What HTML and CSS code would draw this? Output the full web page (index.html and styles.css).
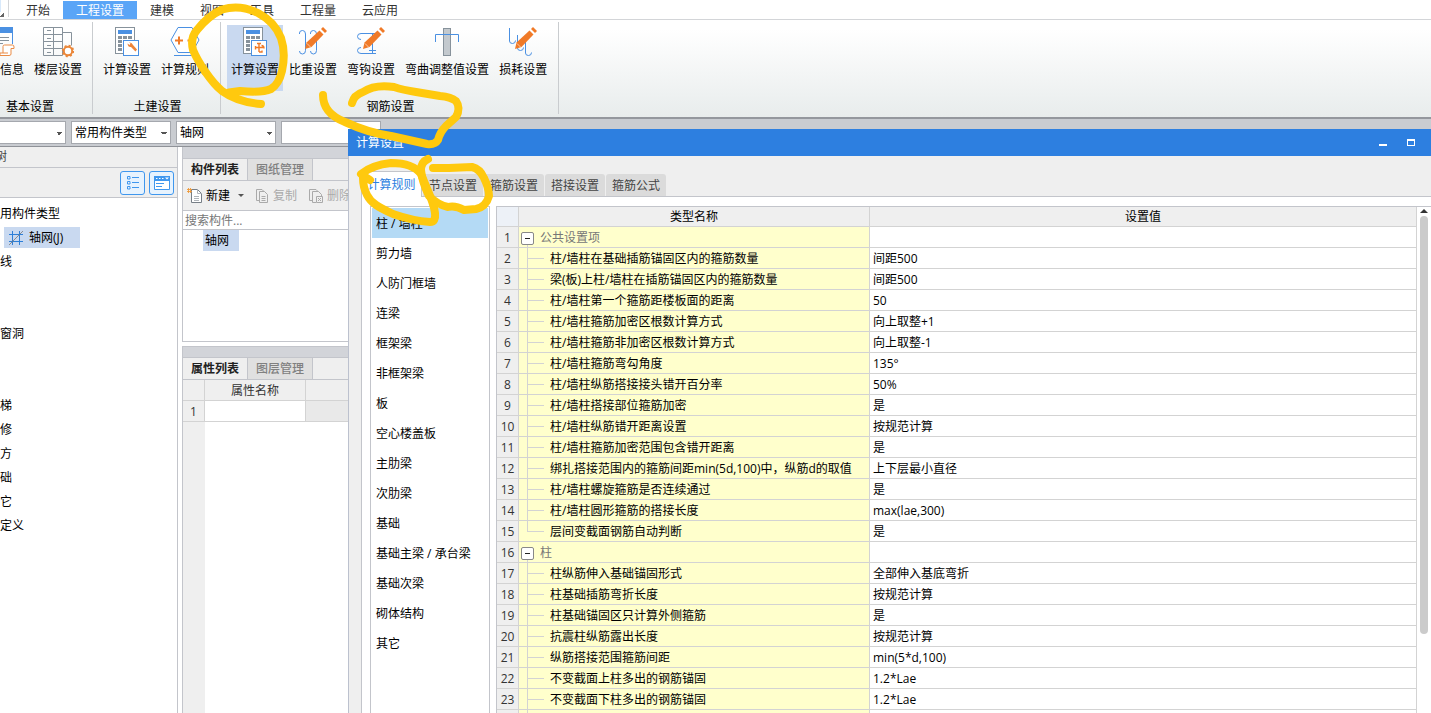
FILE: index.html
```
<!DOCTYPE html>
<html lang="zh-CN">
<head>
<meta charset="utf-8">
<title>计算设置</title>
<link rel="stylesheet" href="styles.css">
</head>
<body>
<svg class="defs" aria-hidden="true">
  <defs>
    <g id="calc">
      <rect x=".5" y="1.500" width="19" height="26" fill="#fff" stroke="#87929b"/>
      <rect x="3" y="4" width="14" height="4" fill="#4a90e2"/>
      <path d="M3 11.500h4M8 11.500h4M13 11.500h4M3 15.500h4M8 15.500h4M3 19.500h4M3 23.500h4" stroke="#87929b" stroke-width="3"/>
      <rect x="8.500" y="14.500" width="15" height="15" fill="#fff" stroke="#4a90e2"/>
    </g>
    <g id="pencil">
      <path d="M7 23l1.500-6.500L21.500 4.500l4 4L13.500 21z" fill="#f07a28"/>
      <path d="M23 3l2-2 4 4-2 2z" fill="#f07a28"/>
      <path d="M9 17.500l3.500 3.500" stroke="#fff" stroke-width=".6"/>
    </g>
  </defs>
</svg>
<div class="app">
  <nav class="menu">
    <span class="corner"></span>
    <a class="menu-tab" href="#">开始</a><a class="menu-tab active" href="#">工程设置</a><a class="menu-tab" href="#">建模</a><a class="menu-tab" href="#">视图</a><a class="menu-tab" href="#">工具</a><a class="menu-tab" href="#">工程量</a><a class="menu-tab" href="#">云应用</a>
  </nav>
  <div class="ribbon">
    <section class="group first">
      <div class="tools">
        <button class="tool cut"><svg width="15" height="32" viewBox="0 0 15 32"><path d="M0 1.500h12.500V18" fill="none" stroke="#4a90e2"/><path d="M0 1h13v6H0z" fill="#4a90e2"/><path d="M0 11.500h9M0 14.500h9M0 17.500h3" stroke="#87929b"/><path d="M3 20.500q0-1.500 1.500-1.500h8q1.500 0 1.500 2v1.500h-3V28q0 1.500-2 1.500H0v-2.500h3zM3 27h5" fill="#fff" stroke="#ea8b45"/></svg><span>信息</span></button>
        <button class="tool"><svg width="32" height="32" viewBox="0 0 32 32"><path d="M1.500 1.500h19v28h-19zM11.500 1.500v28M1.500 8.500h19M1.500 15.500h19M1.500 22.500h19M20.500 6.500h9v13" fill="none" stroke="#87929b"/><path d="M5 4.500h4M5 12.500h4M5 19.500h4M5 26.500h4" stroke="#87929b"/><circle cx="26" cy="25" r="4.200" fill="#fff" stroke="#ea8638" stroke-width="2"/><circle cx="26" cy="25" r="5.400" fill="none" stroke="#ea8638" stroke-width="1.600" stroke-dasharray="2.100 2.140"/></svg><span>楼层设置</span></button>
      </div>
      <h2>基本设置</h2>
    </section>
    <section class="group">
      <div class="tools">
        <button class="tool"><svg width="24" height="32" viewBox="0 0 24 32"><use href="#calc"/><path d="M12.500 17.500l2 1.500 1-1.500-1.500-1q3-.5 4 2.500l4 4.500-1.500 2-4.500-4.500q-3 .5-3.500-3.500z" fill="#ee8438"/></svg><span>计算设置</span></button>
        <button class="tool"><svg width="30" height="32" viewBox="0 0 30 32"><path d="M8 1.500h14L29 14l-7 12.500H8L1 14z" fill="#fff" stroke="#4a90e2"/><path d="M5 14.500h8M9 10.500v8M17.500 14.500h4" stroke="#f07a28" stroke-width="2"/><path d="M4 29.500h22" stroke="#4a90e2"/></svg><span>计算规则</span></button>
      </div>
      <h2>土建设置</h2>
    </section>
    <section class="group">
      <div class="tools">
        <button class="tool on"><svg width="24" height="32" viewBox="0 0 24 32"><use href="#calc"/><path d="M16 17.500V26M14 17.500h4M12 21.500h9M12.500 20v3.500M18.500 19.500q2.500 0 2.500 3M16 26h3v-1.500" fill="none" stroke="#f07a28" stroke-width="1.400"/></svg><span>计算设置</span></button>
        <button class="tool"><svg width="30" height="32" viewBox="0 0 30 32"><path d="M1.500 8V7q0-2.500 3-2.500t3 3.500v16.500q0 3.500-3 3.500t-3-3M12.500 8V7q0-2.500 3-2.500t3 3.500v16.500q0 3.500-3 3.500t-3-3" fill="none" stroke="#4a90e2"/><use href="#pencil"/></svg><span>比重设置</span></button>
        <button class="tool"><svg width="30" height="32" viewBox="0 0 30 32"><path d="M22 7.500H5q-3.500 0-3.500 3t3.500 3M20 27.500H5q-3.500 0-3.500-3t3.500-3M16.500 7.500v20M13 24.500h7" fill="none" stroke="#4a90e2"/><use href="#pencil"/></svg><span>弯钩设置</span></button>
        <button class="tool"><svg width="24" height="32" viewBox="0 0 24 32"><rect x="8.500" y="2.500" width="7" height="27" fill="#c3c9ce" stroke="#87929b"/><path d="M.5 16V8.500h23V16" fill="none" stroke="#4a90e2"/></svg><span>弯曲调整值设置</span></button>
        <button class="tool"><svg width="30" height="32" viewBox="0 0 30 32"><path d="M1.500 2v13q0 2.500 3 2.500t3-3M9.500 9v13q0 2.500 3 2.500t3-3M17.500 16v11q0 2.500 3 2.500t3-3" fill="none" stroke="#4a90e2"/><use href="#pencil"/></svg><span>损耗设置</span></button>
      </div>
      <h2>钢筋设置</h2>
    </section>
  </div>
  <div class="filters">
    <select class="combo short" aria-label="楼层"><option></option></select>
    <select class="combo" aria-label="构件类型"><option>常用构件类型</option></select>
    <select class="combo" aria-label="构件"><option>轴网</option></select>
    <select class="combo" aria-label="名称"><option></option></select>
  </div>
  <main class="work">
    <aside class="nav">
      <div class="nav-title">树</div>
      <div class="nav-tools">
        <button aria-label="列表"><svg width="14" height="14" viewBox="0 0 14 14"><path d="M1.500.5H4V3H1.500zM1.500 5.500H4V8H1.500zM1.500 10.500H4V13H1.500zM6 1.500h7M6 6.500h7M6 11.500h7" fill="none" stroke="#3f97ee"/></svg></button>
        <button aria-label="窗口"><svg width="16" height="14" viewBox="0 0 16 14"><path d="M.5.5h15v13H.5z" fill="#fff" stroke="#3f97ee"/><path d="M0 0h16v5H0z" fill="#3f97ee"/><path d="M2 2.500h1.500M5 2.500h1.500M8 2.500h1.500" stroke="#fff"/><path d="M11 1.500h4l-2 2z" fill="#fff"/><path d="M2 7.500h8M2 10.500h6" stroke="#3f97ee"/></svg></button>
      </div>
      <ul class="tree">
        <li>用构件类型</li>
        <li><span class="picked"><svg width="16" height="16" viewBox="0 0 16 16"><path d="M4.500 1v14M11.500 1v14M1 4.500h14M1 11.500h14" stroke="#2d7fd8"/><path d="M1 15L15 1" stroke="#777" stroke-width=".8"/></svg>轴网(J)</span></li>
        <li>线</li><li></li><li></li><li>窗洞</li><li></li><li></li><li>梯</li><li>修</li><li>方</li><li>础</li><li>它</li><li>定义</li>
      </ul>
    </aside>
    <div class="lists">
      <section class="panel">
        <div class="strip"></div>
        <div class="tabs"><button class="on">构件列表</button><button>图纸管理</button></div>
        <div class="actions">
          <button><svg width="15" height="16" viewBox="0 0 15 16"><path d="M4.500 1.500h6l4 4v9h-10z" fill="#fff" stroke="#777f87"/><path d="M10.500 1.500v4h4M7 8.500h5M7 10.500h5M7 12.500h5" fill="none" stroke="#b0b5ba"/><path d="M0 1.500h5M0 3.500h5M1.500 0v5M3.500 0v5" stroke="#ee9a3a" stroke-width=".9"/></svg>新建<i class="caret"></i></button>
          <button class="off"><svg width="13" height="16" viewBox="0 0 13 16"><path d="M3.500 3.500h5l3 3v8h-8zM3 12.500H.5v-11H6l2 2M5.500 8.500h4M5.500 10.500h4M5.500 12.500h4" fill="none" stroke="#aaa"/></svg>复制</button>
          <button class="off"><svg width="14" height="16" viewBox="0 0 14 16"><path d="M3 12.500H.5v-11H7l2 2M7 14.500H3.500v-11h6l3 3V8M7.500 8.500h6v6h-6zM9 10l3 3M12 10l-3 3" fill="none" stroke="#aaa"/></svg>删除</button>
        </div>
        <input class="search" type="text" placeholder="搜索构件..." aria-label="搜索构件">
        <div class="items"><span>轴网</span></div>
      </section>
      <section class="panel grow">
        <div class="strip"></div>
        <div class="tabs"><button class="on">属性列表</button><button>图层管理</button></div>
        <table class="props">
          <thead><tr><th class="no"></th><th class="pname">属性名称</th><th></th></tr></thead>
          <tbody><tr><th class="no">1</th><td></td><td class="dim"></td></tr></tbody>
        </table>
        <div class="gutter"></div>
      </section>
    </div>
  </main>

  <section class="dialog" role="dialog" aria-label="计算设置">
    <header class="title"><h1>计算设置</h1>
      <button aria-label="最小化"><i class="min"></i></button><button aria-label="最大化"><i class="max"></i></button>
    </header>
    <div class="dlg-tabs"><button class="on">计算规则</button><button>节点设置</button><button>箍筋设置</button><button>搭接设置</button><button>箍筋公式</button></div>
    <div class="sheet">
      <ul class="kinds">
        <li class="on">柱 / 墙柱</li><li>剪力墙</li><li>人防门框墙</li><li>连梁</li><li>框架梁</li><li>非框架梁</li><li>板</li><li>空心楼盖板</li><li>主肋梁</li><li>次肋梁</li><li>基础</li><li>基础主梁 / 承台梁</li><li>基础次梁</li><li>砌体结构</li><li>其它</li>
      </ul>
      <div class="grid">
        <table class="rules">
          <thead><tr><th class="no"></th><th class="name">类型名称</th><th>设置值</th></tr></thead>
          <tbody>
            <tr class="cat"><th>1</th><td><button aria-label="折叠"></button>公共设置项</td><td></td></tr>
            <tr><th>2</th><td>柱/墙柱在基础插筋锚固区内的箍筋数量</td><td>间距500</td></tr>
            <tr><th>3</th><td>梁(板)上柱/墙柱在插筋锚固区内的箍筋数量</td><td>间距500</td></tr>
            <tr><th>4</th><td>柱/墙柱第一个箍筋距楼板面的距离</td><td>50</td></tr>
            <tr><th>5</th><td>柱/墙柱箍筋加密区根数计算方式</td><td>向上取整+1</td></tr>
            <tr><th>6</th><td>柱/墙柱箍筋非加密区根数计算方式</td><td>向上取整-1</td></tr>
            <tr><th>7</th><td>柱/墙柱箍筋弯勾角度</td><td>135°</td></tr>
            <tr><th>8</th><td>柱/墙柱纵筋搭接接头错开百分率</td><td>50%</td></tr>
            <tr><th>9</th><td>柱/墙柱搭接部位箍筋加密</td><td>是</td></tr>
            <tr><th>10</th><td>柱/墙柱纵筋错开距离设置</td><td>按规范计算</td></tr>
            <tr><th>11</th><td>柱/墙柱箍筋加密范围包含错开距离</td><td>是</td></tr>
            <tr><th>12</th><td>绑扎搭接范围内的箍筋间距min(5d,100)中，纵筋d的取值</td><td>上下层最小直径</td></tr>
            <tr><th>13</th><td>柱/墙柱螺旋箍筋是否连续通过</td><td>是</td></tr>
            <tr><th>14</th><td>柱/墙柱圆形箍筋的搭接长度</td><td>max(lae,300)</td></tr>
            <tr class="last"><th>15</th><td>层间变截面钢筋自动判断</td><td>是</td></tr>
            <tr class="cat"><th>16</th><td><button aria-label="折叠"></button>柱</td><td></td></tr>
            <tr><th>17</th><td>柱纵筋伸入基础锚固形式</td><td>全部伸入基底弯折</td></tr>
            <tr><th>18</th><td>柱基础插筋弯折长度</td><td>按规范计算</td></tr>
            <tr><th>19</th><td>柱基础锚固区只计算外侧箍筋</td><td>是</td></tr>
            <tr><th>20</th><td>抗震柱纵筋露出长度</td><td>按规范计算</td></tr>
            <tr><th>21</th><td>纵筋搭接范围箍筋间距</td><td>min(5*d,100)</td></tr>
            <tr><th>22</th><td>不变截面上柱多出的钢筋锚固</td><td>1.2*Lae</td></tr>
            <tr><th>23</th><td>不变截面下柱多出的钢筋锚固</td><td>1.2*Lae</td></tr>
            <tr><th></th><td></td><td></td></tr>
          </tbody>
        </table>
        <div class="scroll"><i class="up"></i><i class="thumb"></i></div>
      </div>
    </div>
  </section>

  <svg class="ink" width="520" height="240" viewBox="0 0 520 240" fill="none" stroke="#ffc90e" stroke-width="8" stroke-linecap="round" stroke-linejoin="round" aria-hidden="true">
    <path d="M261 104Q237 102 222 91C211 82 198 62 193 50Q190 38 197 30Q208 16 222 9.500Q240 4 258 13Q275 22 281 38Q286 53 282 71Q279 84 271 89Q262 93 240 91L229 92.500"/>
    <path d="M323 95C323 108 332 117 345 122C358 128 376 134 391 136L427 144Q435 145 438 140Q440 132 446 126L456 117Q461 108 456 101Q451 97 440 96L416 92Q403 90 394 87Q375 84 363 92Q354 95 352 103"/>
    <path d="M370 180L361 174Q372 165 391 163Q413 163 421 174C426 187 434 202 435 213Q436 222 430 222Q413 221 393 214C378 207 371 203 367 195Q363 187 363 178"/>
    <path d="M428 159Q421 162 421 170Q422 182 429 196Q438 205 448 207Q455 205 464 210L476 209Q486 207 489 196Q489 188 484 178Q480 169 472 167L449 168H433"/>
  </svg>
</div>
</body>
</html>
```
FILE: styles.css
```
* { box-sizing: border-box; }
body, h1, h2, ul { margin: 0; padding: 0; }
ul { list-style: none; }
body, button, input, select, table {
  font: 12px/20px "Open Sans", "Noto Sans CJK SC", sans-serif;
  color: #000;
}
h1, h2 { font-size: 12px; font-weight: 400; }
button { border: 0; padding: 0; background: none; white-space: nowrap; }
svg { flex: none; }
.defs { position: absolute; width: 0; height: 0; }

.app {
  position: relative;
  display: flex;
  flex-direction: column;
  height: 100vh;
  overflow: hidden;
  background: #fff;
}

/* Menu */
.menu { display: flex; height: 20px; border-bottom: 1px solid #d3d5d8; }
.corner {
  width: 9px;
  margin-right: 4px;
  height: 17px;
  border-right: 1px solid #d3d5d8;
  background: linear-gradient(135deg, transparent 50%, #666 50%) 0 13px / 4px 4px no-repeat,
    linear-gradient(#d8e9fb, #d8e9fb) 0 0 / 1px 12px no-repeat;
}
.menu-tab { padding: 1px 13px 0; color: #333; text-decoration: none; }
.menu-tab.active { margin-top: 1px; padding-top: 0; background: #5aa5f7; color: #fff; }

/* Ribbon */
.ribbon {
  display: flex;
  height: 99px;
  border-bottom: 2px solid #94979d;
  background: linear-gradient(#fff 10%, #e8ecec);
}
.group {
  margin: 2px 0 3px;
  padding: 3px 6px 0 5px;
  border-right: 1px solid #c9cccf;
}
.group.first { padding: 3px 5px 0 0; }
.tools { display: flex; height: 66px; }
.tool {
  display: flex;
  flex-direction: column;
  align-items: center;
  gap: 2px;
  padding: 1px 4px 0;
  border: solid transparent;
  border-width: 0 1px;
}
.tool.cut { align-items: flex-start; padding-left: 0; border-left: 0; }
.tool.on { background: #c9d9f0 padding-box; }
.group h2 { padding: 6px 0 0 3px; text-align: center; }
.group.first h2 { padding-left: 6px; text-align: left; }

/* Filters */
.filters {
  display: flex;
  gap: 5px;
  height: 28px;
  padding: 2px 0 3px;
  border-bottom: 1px solid #8f9298;
  background: #c9ccd1;
}
.combo {
  appearance: none;
  width: 100px;
  height: 23px;
  padding: 0 14px 0 3px;
  border: 1px solid #a5a8ae;
  border-radius: 0;
  background: linear-gradient(to bottom left, transparent 50%, #555 50%) right 0 top 0 / 0 0 no-repeat,
    linear-gradient(to bottom right, #555 50%, transparent 50%) right 3px top 10px / 3px 3px no-repeat,
    linear-gradient(to bottom left, #555 50%, transparent 50%) right 6px top 10px / 3px 3px no-repeat, #fff;
}
.combo.short { width: 66px; border-left: 0; }

/* Workspace */
.work { display: flex; flex: 1; min-height: 0; }
.nav { width: 178px; border-right: 1px solid #c3c5cb; }
.nav-title { height: 21px; text-indent: -5px; overflow: hidden; background: #efefef; border-bottom: 1px solid #c3c5cb; color: #444; }
.nav-tools {
  display: flex;
  justify-content: flex-end;
  gap: 4px;
  height: 30px;
  padding: 3px 3px 0 0;
  background: #efefef;
  border-bottom: 1px solid #c3c5cb;
}
.nav-tools button {
  display: grid;
  place-items: center;
  width: 25px;
  height: 24px;
  border: 1px solid #3f97ee;
  border-radius: 3px;
  background: #e7f3fe;
}
.tree { padding-top: 4px; }
.tree li { height: 24px; line-height: 24px; }
.picked {
  display: flex;
  align-items: center;
  gap: 5px;
  width: 76px;
  height: 21px;
  margin-left: 4px;
  padding-left: 4px;
  background: #c9d9f0;
}
.tree li:has(.picked) { padding-top: 1px; }
.lists { display: flex; flex-direction: column; gap: 4px; width: 220px; margin-left: 4px; }
.panel { display: flex; flex-direction: column; border: 1px solid #c3c5cb; border-top: 0; }
.panel.grow { flex: 1; border-top: 1px solid #c3c5cb; border-bottom: 0; }
.strip { height: 12px; background: #d2d4d9; border-bottom: 1px solid #c3c5cb; }
.grow .strip { height: 11px; }
.tabs { display: flex; height: 22px; background: #efefef; border-bottom: 1px solid #c3c5cb; }
.tabs button { width: 65px; border-right: 1px solid #c3c5cb; background: #e0e0e0; color: #808080; font-weight: 500; }
.tabs .on { background: #efefef; color: #222; font-weight: 700; }
.actions { display: flex; gap: 12px; height: 30px; padding: 0 4px; background: #efefef; border-bottom: 1px solid #c3c5cb; }
.actions button { display: flex; align-items: center; gap: 4px; }
.actions .off { color: #aaa; }
.caret { margin-left: 4px; border: solid transparent; border-width: 3px 3px 0; border-top-color: #555; }
.search { width: 100%; height: 19px; padding: 1px 2px 0; border: 0; border-bottom: 1px solid #c3c5cb; background: #fff; outline: 0; }
.search::placeholder { color: #777; opacity: 1; }
.items { height: 111px; padding-left: 20px; }
.items span { display: inline-block; width: 36px; height: 21px; padding: 1px 0 0 2px; background: #c9d9f0; }
.props { width: 100%; border-collapse: separate; border-spacing: 0; table-layout: fixed; }
.props th, .props td { height: 21px; padding: 2px 0 0; border: solid #d3d3d3; border-width: 0 1px 1px 0; font-weight: 400; line-height: 18px; background: #efefef; color: #333; }
.props td { background: #fff; }
.props .dim { background: #e9e9e9; }
.props .no { width: 22px; }
.props .pname { width: 101px; }
.gutter { flex: 1; width: 22px; background: #efefef; }

/* Dialog window over the workspace */
.dialog {
  position: absolute;
  inset: 129px 0 0 348px;
  display: flex;
  flex-direction: column;
  border-left: 1px solid #bcc1ce;
  background: #efefef;
}
.title { display: flex; height: 27px; margin-left: -1px; padding: 0 12px 0 8px; background: #2d7fe0; color: #fff; }
.title h1 { flex: 1; line-height: 28px; color: #fff; }
.title button { display: flex; align-items: center; width: 28px; padding-left: 16px; }
.min { width: 8px; height: 2px; margin-top: 4px; background: #fff; }
.max { width: 8px; height: 7px; border: 1px solid #fff; border-top-width: 2px; }
.dlg-tabs { display: flex; align-items: flex-end; gap: 1px; height: 40px; padding-left: 12px; }
.dlg-tabs button { width: 60px; height: 22px; padding-top: 1px; border-radius: 3px 3px 0 0; background: #dbdbdb; color: #444; }
.dlg-tabs .on { position: relative; width: 61px; height: 26px; margin-bottom: -1px; padding: 0; border: 1px solid #c3c5cb; border-bottom: 0; background: #fff; color: #2d7fe0; }
.sheet {
  display: flex;
  flex: 1;
  gap: 6px;
  min-height: 0;
  margin-left: 12px;
  padding: 9px 0 0 8px;
  border: solid #c3c5cb;
  border-width: 1px 0 0 1px;
  background: #fff;
}
.kinds { width: 120px; padding: 1px; border: 1px solid #c3c5cb; border-bottom: 0; }
.kinds li { height: 30px; padding-left: 4px; line-height: 31px; white-space: nowrap; }
.kinds .on { background: #b4daf5; }
.grid { display: flex; flex: 1; min-width: 0; overflow: hidden; border-top: 1px solid #c3c5cb; border-left: 1px solid #c3c5cb; }
.rules { flex: 1; border-collapse: separate; border-spacing: 0; table-layout: fixed; align-self: flex-start; }
.rules th, .rules td {
  height: 21px;
  padding: 2px 0 0;
  border: solid #d3d3d3;
  border-width: 0 1px 1px 0;
  font-weight: 400;
  line-height: 18px;
  text-align: left;
  white-space: nowrap;
}
.rules thead th { height: 20px; padding: 1px 0 0; text-align: center; background: #efefef; }
.rules thead .no { width: 22px; background: #edf1f7; }
.rules .name { width: 351px; }
.rules tbody th { text-align: center; background: #efefef; color: #333; }
.rules td { padding-left: 3px; }
.rules td:nth-child(2) {
  padding-left: 31px;
  background: linear-gradient(#d3d3d3, #d3d3d3) 8px 0 / 1px 100% no-repeat,
    linear-gradient(#d3d3d3, #d3d3d3) 8px 10px / 17px 1px no-repeat, #ffc;
}
.rules .last td:nth-child(2) { background-size: 1px 10px, 17px 1px; }
.rules .cat td:nth-child(2) {
  padding-left: 2px;
  background: linear-gradient(#d3d3d3, #d3d3d3) 8px 16px / 1px 4px no-repeat, #ffc;
  color: #777;
}
.cat button {
  width: 13px;
  height: 13px;
  margin-right: 6px;
  border: 1px solid #888;
  border-radius: 2px;
  vertical-align: -2px;
  background: linear-gradient(#222, #222) center / 5px 1px no-repeat, #fff;
}
.scroll { display: flex; flex-direction: column; align-items: center; width: 14px; padding-top: 2px; }
.up { border: solid transparent; border-width: 0 4px 4px; border-bottom-color: #333; }
.thumb { width: 8px; height: 83%; margin-top: 3px; border-radius: 4px; background: #cbcbcb; }

/* Freehand marks drawn over everything */
.ink { position: absolute; top: 0; left: 0; pointer-events: none; }
```
